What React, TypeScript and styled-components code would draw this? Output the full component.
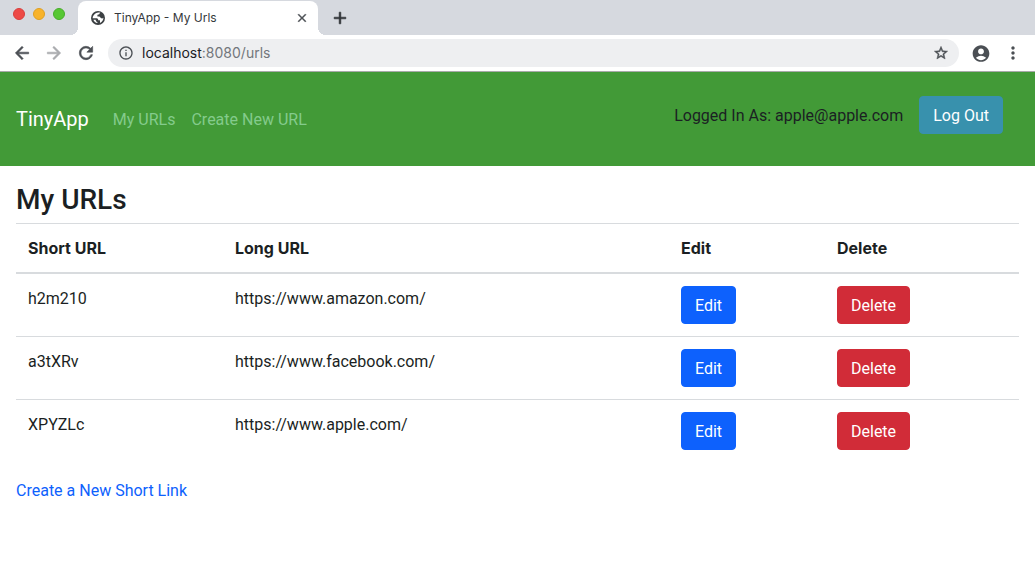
import React from "react";
import styled, { createGlobalStyle } from "styled-components";
import {
  MdAccountCircle,
  MdAdd,
  MdArrowBack,
  MdArrowForward,
  MdClose,
  MdInfoOutline,
  MdMoreVert,
  MdRefresh,
  MdStarBorder,
} from "react-icons/md";

const GlobalStyle = createGlobalStyle`
  *, *::before, *::after { box-sizing: border-box; }
  body {
    margin: 0;
    background: #fff;
    color: #1b1f23;
    font-family: Roboto, "Liberation Sans", sans-serif;
    font-size: 16px;
    line-height: 26px;
  }
`;

const BrowserChrome = styled.header`
  font-family: Inter, "Liberation Sans", sans-serif;
`;

const TabStrip = styled.div`
  display: flex;
  align-items: flex-end;
  height: 35px;
  background: #d6d9df;
`;

const WindowControls = styled.div`
  display: flex;
  align-self: flex-start;
  gap: 8px;
  padding: 8px 13px;
`;

const WindowButton = styled.button<{ $color: string; $edge: string }>`
  width: 12px;
  height: 12px;
  padding: 0;
  border: 1px solid ${(p) => p.$edge};
  border-radius: 50%;
  background: ${(p) => p.$color};
`;

const Tab = styled.div`
  position: relative;
  display: flex;
  align-items: center;
  gap: 8px;
  width: 240px;
  height: 34px;
  padding: 0 8px 0 12px;
  border-radius: 8px 8px 0 0;
  background: #fff;

  &::before,
  &::after {
    content: "";
    position: absolute;
    bottom: 0;
    width: 8px;
    height: 8px;
  }
  &::before {
    right: 100%;
    background: radial-gradient(circle at 0 0, transparent 8px, #fff 8px);
  }
  &::after {
    left: 100%;
    background: radial-gradient(circle at 100% 0, transparent 8px, #fff 8px);
  }
`;

const TabTitle = styled.span`
  flex: 1;
  font-size: 12px;
  color: #35383c;
`;

const IconButton = styled.button<{ $size: number; $color?: string; $bold?: boolean }>`
  display: flex;
  align-items: center;
  justify-content: center;
  flex: none;
  width: ${(p) => p.$size}px;
  height: ${(p) => p.$size}px;
  padding: 0;
  border: 0;
  background: none;
  color: ${(p) => p.$color ?? "#4b4f54"};

  svg {
    stroke-width: ${(p) => (p.$bold ? 0.7 : 0)};
  }
  path[fill="none"] {
    stroke: none;
  }
`;

const NewTab = styled(IconButton)`
  align-self: center;
  margin-left: 12px;
`;

const Toolbar = styled.div`
  display: flex;
  align-items: center;
  gap: 12px;
  height: 37px;
  padding: 0 12px;
  border-bottom: 1px solid #a8aaa9;
  background: #fff;
`;

const AddressBar = styled.div`
  display: flex;
  flex: 1;
  align-items: center;
  gap: 8px;
  height: 28px;
  padding: 0 10px;
  border-radius: 14px;
  background: #eeeff1;
  color: #4b4f54;
`;

const Address = styled.a`
  flex: 1;
  color: #73777c;
  font-size: 14px;
  text-decoration: none;

  strong {
    color: #202124;
    font-weight: 400;
  }
`;

const Navbar = styled.nav`
  display: flex;
  align-items: center;
  padding: 24px 16px;
  background: #429a37;
`;

const Brand = styled.a`
  margin-right: 16px;
  color: #fff;
  font-size: 20px;
  line-height: 30px;
  text-decoration: none;
`;

const NavLink = styled.a`
  padding: 10px 8px 8px;
  color: #84cb8c;
  text-decoration: none;
`;

const Session = styled.form`
  display: flex;
  align-items: center;
  gap: 16px;
  margin: 0 16px 8px auto;
`;

const SessionUser = styled.span`
  padding-top: 2px;
`;

const palette = { info: "#3891ad", primary: "#0d61fd", danger: "#d12c38" };

const Button = styled.button<{ $tone: keyof typeof palette }>`
  padding: 6px 13px 4px;
  border: 1px solid ${(p) => palette[p.$tone]};
  border-radius: 4px;
  background: ${(p) => palette[p.$tone]};
  color: #fff;
  font: inherit;
`;

const Main = styled.main`
  padding: 16px;
`;

const Title = styled.h1`
  margin: 0 0 5px;
  font-size: 28px;
  font-weight: 500;
  line-height: 36px;
`;

const Table = styled.table`
  width: 100%;
  margin-bottom: 16px;
  border-spacing: 0;

  th,
  td {
    padding: 12px;
    border-top: 1px solid #d8dbde;
    text-align: left;
    vertical-align: top;
  }
  th {
    border-bottom: 2px solid #d8dbde;
    font-family: Inter, "Liberation Sans", sans-serif;
    font-weight: 700;
    line-height: 24px;
  }
  tbody tr:first-child td {
    border-top: 0;
  }
  ${Button} {
    display: block;
  }
`;

const HeaderCell = styled.th<{ $width: number }>`
  width: ${(p) => p.$width}px;
`;

const CreateLink = styled.a`
  color: #0d61fd;
  text-decoration: none;
`;

const Globe = () => (
  <svg width="16" height="16" viewBox="0 0 16 16" aria-hidden="true">
    <circle cx="8" cy="8" r="7" fill="#3c4043" />
    <path
      d="M10.4 2.8C8 2 5 3 3.5 5.4C3 6.3 2.6 7.2 2.6 8.2H6.6C8 8.2 8.2 9.2 8.2 10.3H10V12.9C12.2 12 13.5 10 13.4 7.8C12.6 8.6 11.6 8.5 10.8 8C10 7.4 10.4 6.6 9 6.6H7.4V5.2C7.4 4.4 8.6 4.6 9.2 4.2C9.6 3.8 9.6 3.2 10.4 2.8Z"
      fill="#fff"
    />
    <path d="M3.4 9.8C4 11.6 5.6 12.8 7.4 13.1V11.9C6.2 11.8 5.8 11 5.6 9.8Z" fill="#fff" />
  </svg>
);

const urls = [
  { id: "h2m210", target: "https://www.amazon.com/" },
  { id: "a3tXRv", target: "https://www.facebook.com/" },
  { id: "XPYZLc", target: "https://www.apple.com/" },
];

export default function App() {
  return (
    <>
      <GlobalStyle />
      <BrowserChrome>
        <TabStrip>
          <WindowControls>
            <WindowButton $color="#ed4a46" $edge="#d93f3c" aria-label="Close window" />
            <WindowButton $color="#f8b32b" $edge="#dfa023" aria-label="Minimize window" />
            <WindowButton $color="#57c734" $edge="#48ad2a" aria-label="Zoom window" />
          </WindowControls>
          <Tab>
            <Globe />
            <TabTitle>TinyApp - My Urls</TabTitle>
            <IconButton $size={16} $bold aria-label="Close tab">
              <MdClose size={14} />
            </IconButton>
          </Tab>
          <NewTab $size={20} $color="#2f3236" $bold aria-label="New tab">
            <MdAdd size={20} />
          </NewTab>
        </TabStrip>
        <Toolbar>
          <IconButton $size={20} $bold aria-label="Back">
            <MdArrowBack size={20} />
          </IconButton>
          <IconButton $size={20} $color="#a9abae" $bold aria-label="Forward">
            <MdArrowForward size={20} />
          </IconButton>
          <IconButton $size={20} $bold aria-label="Reload">
            <MdRefresh size={20} />
          </IconButton>
          <AddressBar>
            <MdInfoOutline size={16} />
            <Address href="#">
              <strong>localhost</strong>:8080/urls
            </Address>
            <IconButton $size={16} $bold aria-label="Bookmark this page">
              <MdStarBorder size={16} />
            </IconButton>
          </AddressBar>
          <IconButton $size={20} aria-label="Profile">
            <MdAccountCircle size={21} />
          </IconButton>
          <IconButton $size={20} aria-label="Menu">
            <MdMoreVert size={20} />
          </IconButton>
        </Toolbar>
      </BrowserChrome>
      <Navbar>
        <Brand href="#">TinyApp</Brand>
        <NavLink href="#">My URLs</NavLink>
        <NavLink href="#">Create New URL</NavLink>
        <Session>
          <SessionUser>Logged In As: apple@apple.com</SessionUser>
          <Button type="button" $tone="info">Log Out</Button>
        </Session>
      </Navbar>
      <Main>
        <Title>My URLs</Title>
        <Table>
          <thead>
            <tr>
              <HeaderCell scope="col" $width={207}>Short URL</HeaderCell>
              <HeaderCell scope="col" $width={446}>Long URL</HeaderCell>
              <HeaderCell scope="col" $width={156}>Edit</HeaderCell>
              <HeaderCell scope="col" $width={194}>Delete</HeaderCell>
            </tr>
          </thead>
          <tbody>
            {urls.map((url) => (
              <tr key={url.id}>
                <td>{url.id}</td>
                <td>{url.target}</td>
                <td><Button type="button" $tone="primary">Edit</Button></td>
                <td><Button type="button" $tone="danger">Delete</Button></td>
              </tr>
            ))}
          </tbody>
        </Table>
        <CreateLink href="#">Create a New Short Link</CreateLink>
      </Main>
    </>
  );
}
